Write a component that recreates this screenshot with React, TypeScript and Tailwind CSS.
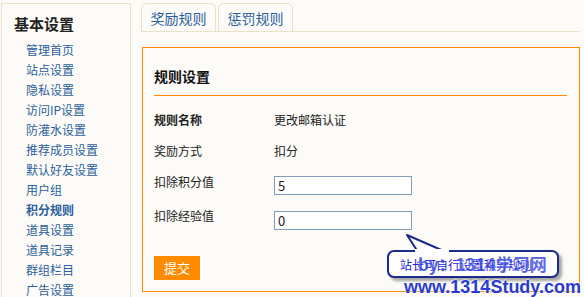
import React from 'react';

const menu = [
    '管理首页', '站点设置', '隐私设置', '访问IP设置', '防灌水设置', '推荐成员设置',
    '默认好友设置', '用户组', '积分规则', '道具设置', '道具记录', '群组栏目', '广告设置',
];

const Sidebar: React.FC = () => (
    <aside className="ml-px mt-[3px] w-[130px] h-[310px] shrink-0 border border-[#e8e2c8]">
        <h2 className="pl-[12px] pt-[10px] text-[15px] leading-[20px] font-bold text-[#222]">基本设置</h2>
        <ul className="mt-[6px] pl-[24px]">
            {menu.map(m => (
                <li
                    key={m}
                    className={`h-[20px] text-[12px] leading-[20px] text-[#2c5f9e] ${m === '积分规则' ? 'font-bold' : ''}`}
                >
                    {m}
                </li>
            ))}
        </ul>
    </aside>
);

const Row: React.FC<{ label: string, bold?: boolean, children: React.ReactNode, className?: string }> = ({ label, bold, children, className }) => (
    <div className={`flex items-start ${className ?? ''}`}>
        <div className={`w-[120px] text-[12px] leading-[20px] text-[#222] ${bold ? 'font-bold' : ''}`}>{label}</div>
        {children}
    </div>
);

// watermark callout lying over the form, as in the screenshot
const Watermark: React.FC = () => (
    <>
        <svg className="absolute left-[400px] top-[230px]" width="60" height="30" viewBox="0 0 60 30">
            <polygon points="7,5 18,22 46,22" fill="#ffffff" stroke="#1c2a8c" strokeWidth="2" strokeLinejoin="round" />
        </svg>
        <div className="absolute left-[387px] top-[250px] w-[172px] h-[28px] rounded-[7px] border-2 border-[#1c2a8c] bg-white shadow-[3px_3px_3px_rgba(0,0,0,0.35)]" />
        <svg className="absolute left-[415px] top-[249px]" width="34" height="5" viewBox="0 0 34 5">
            <rect x="0" y="0" width="34" height="5" fill="#ffffff" />
        </svg>
        <div className="absolute left-[400px] top-[256px] text-[12px] leading-[18px] text-[#2222dd] whitespace-nowrap">
            站长可自行设置积分规则
        </div>
        <div className="absolute left-[418px] top-[254px] text-[17px] leading-[20px] font-bold text-[#3344dd] whitespace-nowrap opacity-80 [text-shadow:0_0_2px_#fff]">
            by：1314学习网
        </div>
        <div className="absolute left-[404px] top-[277px] text-[18px] leading-[20px] font-bold text-[#2a3bd0] whitespace-nowrap [font-family:'Liberation_Sans',Arial,sans-serif] [text-shadow:0_0_2px_#fff,0_0_2px_#fff]">
            www.1314Study.com
        </div>
    </>
);

export default function App() {
    return (
        <div className="relative flex w-[584px] h-[297px] overflow-hidden bg-[#fcfbf7] [font-family:'Noto_Sans_CJK_SC','Noto_Sans',sans-serif]">
            <Sidebar />
            <main className="ml-[10px] mt-[3px] w-[439px] shrink-0">
                <div className="flex gap-[2px] border-b border-[#e8e2c8]">
                    {['奖励规则', '惩罚规则'].map(t => (
                        <div
                            key={t}
                            className="w-[75px] h-[29px] -mb-px border border-b-0 border-[#e8e2c8] rounded-t-[6px] flex items-center justify-center text-[14px] text-[#2c5f9e]"
                        >
                            {t}
                        </div>
                    ))}
                </div>
                <section className="mt-[15px] ml-px h-[245px] border border-[#ff8c00] px-[11px] pt-[18px]">
                    <div className="border-b border-[#ff8c00] pb-[9px] mr-px">
                        <h3 className="text-[14px] leading-[20px] font-bold text-[#111]">规则设置</h3>
                    </div>
                    <Row label="规则名称" bold className="mt-[14px] h-[31px]">
                        <span className="text-[12px] leading-[20px] text-[#222]">更改邮箱认证</span>
                    </Row>
                    <Row label="奖励方式" className="h-[31px]">
                        <span className="text-[12px] leading-[20px] text-[#222]">扣分</span>
                    </Row>
                    <Row label="扣除积分值" className="h-[34px]">
                        <div className="mt-[4px] w-[138px] h-[19px] border border-[#7f9db9] bg-white px-[3px] text-[13px] leading-[17px] text-[#222]">5</div>
                    </Row>
                    <Row label="扣除经验值" className="h-[24px]">
                        <div className="mt-[5px] w-[138px] h-[19px] border border-[#7f9db9] bg-white px-[3px] text-[13px] leading-[17px] text-[#222]">0</div>
                    </Row>
                    <button className="mt-[26px] w-[46px] h-[24px] bg-[#ff8c00] text-white text-[13px] leading-[24px]">提交</button>
                </section>
            </main>
            <Watermark />
        </div>
    );
}
